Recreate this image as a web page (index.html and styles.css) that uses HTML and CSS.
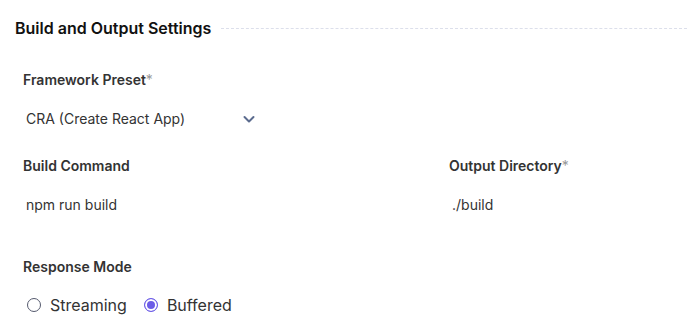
FILE: index.html
```html
<!DOCTYPE html>
<html lang="en">
<head>
    <meta charset="UTF-8">
    <meta name="viewport" content="width=device-width, initial-scale=1.0">
    <title>Build Settings</title>
    <link rel="stylesheet" href="styles.css">
</head>
<body>
    <!-- Section header -->
    <div class="section-head">
        <h3>Build and Output Settings</h3>
        <div class="dash"></div>
    </div>

    <div class="form">
        <!-- Framework -->
        <div class="field">
            <label>Framework Preset<span class="req">*</span></label>
            <div class="select">
                <span>CRA (Create React App)</span>
                <svg width="14" height="14" viewBox="0 0 14 14"><path d="M2.5 5l4.5 4.5L11.5 5" fill="none" stroke="#5b6b8e" stroke-width="2" stroke-linecap="round" stroke-linejoin="round"/></svg>
            </div>
        </div>

        <!-- Build / Output -->
        <div class="row">
            <div class="field">
                <label>Build Command</label>
                <div class="value">npm run build</div>
            </div>
            <div class="field">
                <label>Output Directory<span class="req">*</span></label>
                <div class="value">./build</div>
            </div>
        </div>

        <!-- Response mode -->
        <div class="field">
            <label>Response Mode</label>
            <div class="radios">
                <label class="radio"><span class="dot"></span>Streaming</label>
                <label class="radio checked"><span class="dot"></span>Buffered</label>
            </div>
        </div>
    </div>
</body>
</html>
```

FILE: styles.css
```css
body {
    margin: 0;
    font-family: Inter, "Noto Sans", sans-serif;
    color: #222;
    background: #fff;
}
/* Header */
.section-head {
    display: flex;
    align-items: center;
    gap: 10px;
    padding: 17px 0 0 15px;
    height: 22px;
}
.section-head h3 {
    margin: 0;
    font-size: 16px;
    font-weight: 600;
    color: #111;
    white-space: nowrap;
}
.dash {
    flex: 1;
    border-top: 1px dashed #dcdfeb;
    margin-top: 1px;
}
/* Form */
.form {
    padding: 32px 0 0 23px;
    display: flex;
    flex-direction: column;
}
.field label {
    display: block;
    font-size: 14px;
    font-weight: 600;
    color: #333;
    line-height: 18px;
}
.req {
    color: #999;
    font-weight: 400;
}
.select {
    display: flex;
    align-items: center;
    width: 230px;
    justify-content: space-between;
    margin: 20px 0 0 3px;
    font-size: 14px;
    color: #333;
    line-height: 20px;
}
.row {
    display: grid;
    grid-template-columns: 426px 1fr;
    margin-top: 28px;
}
.value {
    margin: 20px 0 0 3px;
    font-size: 14px;
    color: #333;
    line-height: 20px;
}
.row + .field {
    margin-top: 43px;
}
.radios {
    display: flex;
    gap: 17px;
    margin-top: 18px;
    padding-left: 4px;
}
.field .radio {
    display: flex;
    align-items: center;
    gap: 9px;
    font-size: 16px;
    font-weight: 400;
    color: #333;
    line-height: 22px;
}
.dot {
    width: 12px;
    height: 12px;
    border: 1.5px solid #555a6e;
    border-radius: 50%;
    box-sizing: content-box;
}
.radio.checked .dot {
    border-color: #6c5ce7;
    background: #6c5ce7;
    box-shadow: inset 0 0 0 2px #fff;
}
```
